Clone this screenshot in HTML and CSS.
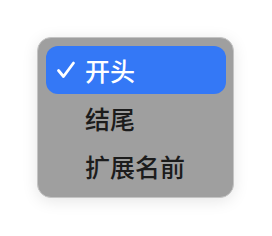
FILE: index.html
```html
<!DOCTYPE html>
<html lang="zh">
<head>
    <meta charset="UTF-8">
    <title>菜单</title>
    <link rel="stylesheet" href="styles.css">
</head>
<body>
    <div class="menu">
        <div class="menu-item selected">
            <span class="check">
                <svg width="20" height="20" viewBox="0 0 20 20"><path d="M2.5 10.5 L7.5 16.5 L17.5 3" fill="none" stroke="#fff" stroke-width="2.8" stroke-linecap="round" stroke-linejoin="round"/></svg>
            </span>
            <span class="label">开头</span>
        </div>
        <div class="menu-item">
            <span class="check"></span>
            <span class="label">结尾</span>
        </div>
        <div class="menu-item">
            <span class="check"></span>
            <span class="label">扩展名前</span>
        </div>
    </div>
</body>
</html>
```

FILE: styles.css
```css
* {
    box-sizing: border-box;
}

body {
    margin: 0;
    width: 272px;
    height: 236px;
    background: #ffffff;
    font-family: "Noto Sans CJK SC", "Noto Sans", sans-serif;
    padding: 37px 0 0 37px;
}

.menu {
    width: 197px;
    height: 161px;
    background: #9f9f9f;
    border: 1px solid #c4c4c4;
    border-radius: 14px;
    box-shadow: 0 3px 16px rgba(0, 0, 0, 0.1);
    padding: 8px 8px 0 8px;
}

.menu-item {
    display: flex;
    align-items: center;
    height: 48px;
    width: 180px;
    border-radius: 12px;
    color: #1c1c1c;
    font-size: 25px;
    font-weight: 500;
}

.menu-item.selected {
    background: #3478f6;
    color: #ffffff;
}

.check {
    width: 39px;
    padding-left: 10px;
    display: flex;
}

.check svg {
    display: block;
}

.label {
    line-height: 1;
}
```
